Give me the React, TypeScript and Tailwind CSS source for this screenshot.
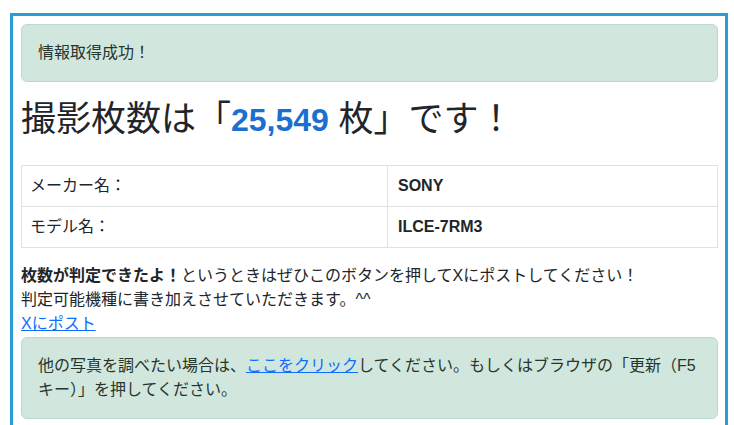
import React from 'react';

const font = { fontFamily: '"Liberation Sans", "Noto Sans CJK JP", sans-serif' };

const Alert = ({ children }: { children: React.ReactNode }) => (
  <div className="rounded-md border border-[#badbcc] bg-[#d1e7dd] p-4 text-base leading-6 text-[#26352d]">
    {children}
  </div>
);

const App = () => {
  return (
    <div className="bg-white pt-[13px] text-[#212529]" style={font}>
      <div className="ml-[10px] mr-[6px] h-[420px] border-[3px] border-b-0 border-[#279fd5] pl-2 pr-[7px] pt-2">
        <div className="mb-4">
          <Alert>情報取得成功！</Alert>
        </div>

        <h1 className="mb-6 text-[35px] font-normal leading-[42px]">
          撮影枚数は「<span className="text-[32px] font-bold text-[#1b6fd1]">25,549</span> 枚」です！
        </h1>

        <div className="border border-[#dee2e6] text-base leading-6">
          <div className="flex border-b border-[#dee2e6]">
            <div className="w-[366px] border-r border-[#dee2e6] px-2 py-2">メーカー名：</div>
            <div className="flex-1 px-[10px] py-2 font-bold">SONY</div>
          </div>
          <div className="flex">
            <div className="w-[366px] border-r border-[#dee2e6] px-2 py-2">モデル名：</div>
            <div className="flex-1 px-[10px] py-2 font-bold">ILCE-7RM3</div>
          </div>
        </div>

        <p className="mt-4 text-base leading-6">
          <b>枚数が判定できたよ！</b>というときはぜひこのボタンを押してXにポストしてください！
          <br />
          判定可能機種に書き加えさせていただきます。^^
          <br />
          <a href="#" className="text-[#0d6efd] underline">Xにポスト</a>
        </p>

        <div className="mt-px">
          <Alert>
            他の写真を調べたい場合は、<a href="#" className="text-[#0d6efd] underline">ここをクリック</a>してください。もしくはブラウザの「更新（F5キー）」を押してください。
          </Alert>
        </div>
      </div>
    </div>
  );
};

export default App;
